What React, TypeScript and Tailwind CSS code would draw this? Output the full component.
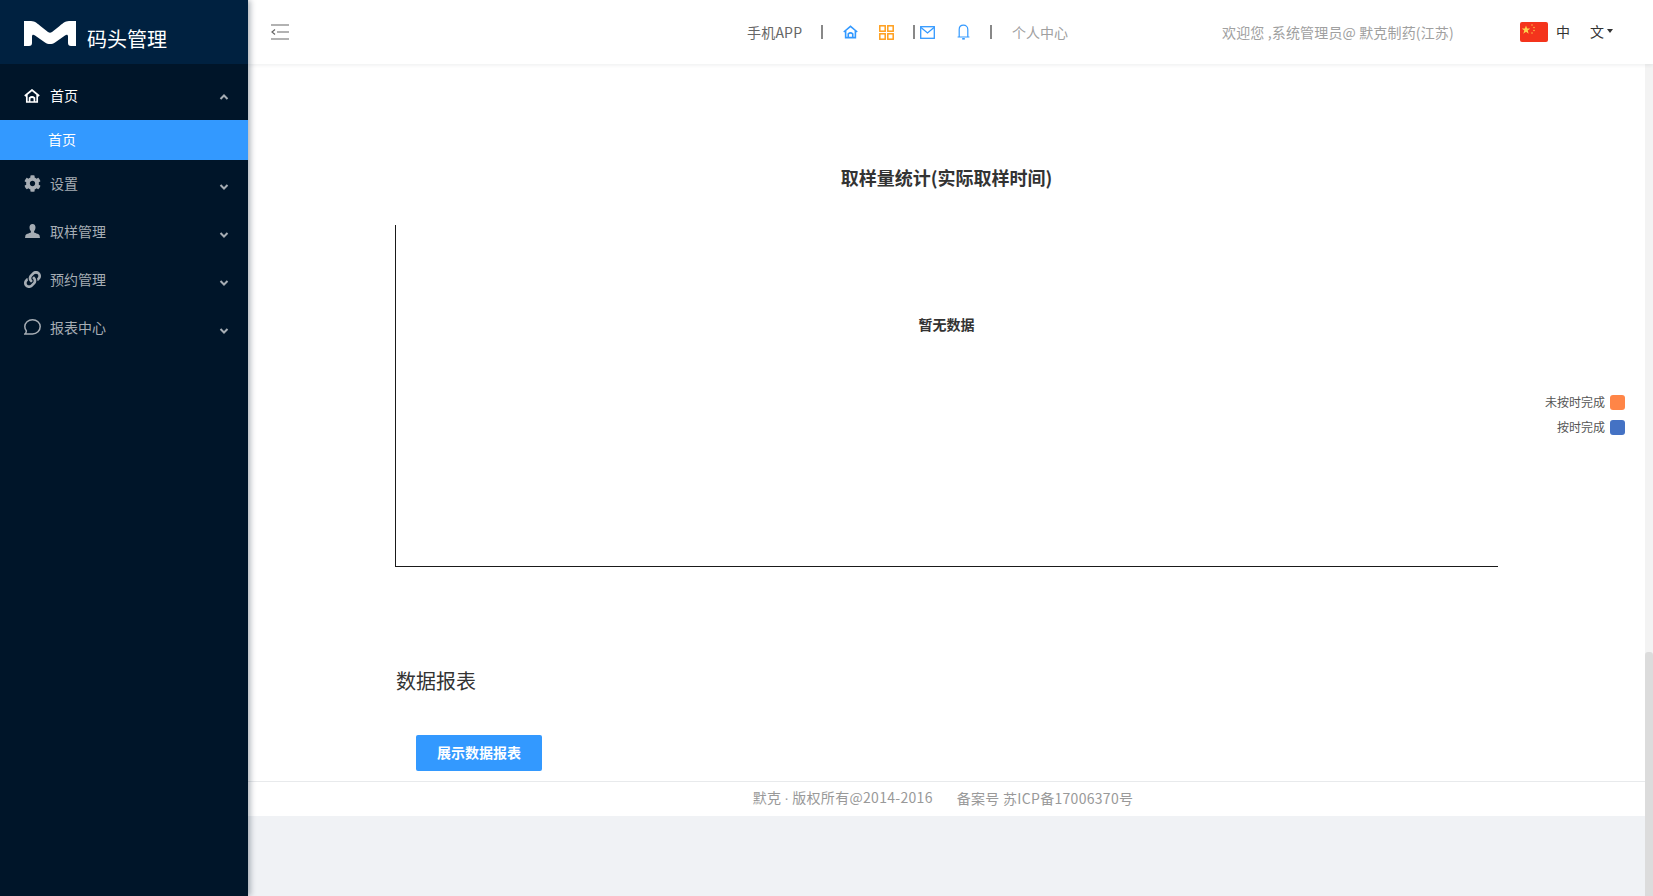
import React from "react";
import { FaCog, FaLink } from "react-icons/fa";

const font = { fontFamily: '"Noto Sans CJK SC", "Liberation Sans", sans-serif' };

function Chevron({ up }: { up?: boolean }) {
  return (
    <svg width="10" height="6" viewBox="0 0 10 6" className={up ? "shrink-0 mt-[2px]" : "shrink-0 mt-[6px]"}>
      <path d={up ? "M1.5 5 L5 1.5 L8.5 5" : "M1.5 1 L5 4.5 L8.5 1"} fill="none" stroke="currentColor" strokeWidth="2" />
    </svg>
  );
}

function HomeIcon({ className = "" }: { className?: string }) {
  return (
    <svg viewBox="0 0 16 14" className={className} fill="none" stroke="currentColor" strokeWidth="1.7">
      <path d="M0.8 7 L8 1 L15.2 7" />
      <path d="M2.8 6 V13 H13.2 V6" />
      <path d="M5.6 13 V9 Q8 7 10.4 9 V13" />
    </svg>
  );
}

function UserIcon() {
  return (
    <svg viewBox="0 0 16 15" className="w-[15px] h-[14px]" fill="currentColor">
      <path d="M8 0 C5.8 0 4.7 1.7 4.8 3.8 C4.9 5.6 5.5 7 6.3 7.8 V9.2 C4.5 10 0.8 10.8 0.4 12.4 L0 15 H16 L15.6 12.4 C15.2 10.8 11.5 10 9.7 9.2 V7.8 C10.5 7 11.1 5.6 11.2 3.8 C11.3 1.7 10.2 0 8 0 Z" />
    </svg>
  );
}

function ChatIcon() {
  return (
    <svg viewBox="0 0 17 16" className="w-[17px] h-[16px] shrink-0" fill="none" stroke="currentColor" strokeWidth="1.5">
      <path d="M8.5 0.8 C12.8 0.8 16.2 3.8 16.2 7.6 C16.2 11.6 12.8 15 8.5 15 H0.8 C2 14 2.4 12.8 2.3 11.8 C1.3 10.6 0.8 9 0.8 7.6 C0.8 3.8 4.2 0.8 8.5 0.8 Z" />
    </svg>
  );
}

function Logo() {
  return (
    <svg viewBox="0 0 52 25" className="w-[52px] h-[25px]" fill="#ffffff">
      <path d="M0 0 H7 C11 0 14 3 17 5.5 L24 11 C25.5 12 26.5 12 28 11 L35 5.5 C38 3 41 0 45 0 H52 V25 H47 C45 25 44 24 44 22 V15.5 C44 13.5 42.5 13.5 41 14.5 L31 21.5 C28 23.5 24 23.5 21 21.5 L11 14.5 C9.5 13.5 8 13.5 8 15.5 V22 C8 24 7 25 5 25 H0 Z" />
    </svg>
  );
}

function Flag() {
  return (
    <svg viewBox="0 0 28 20" className="block w-[28px] h-[20px] rounded-[2px]">
      <rect width="28" height="20" fill="#f4341c" />
      <polygon fill="#fcd34d" points="6,3.5 7.1,6.6 10.3,6.6 7.7,8.6 8.7,11.7 6,9.8 3.3,11.7 4.3,8.6 1.7,6.6 4.9,6.6" />
      <circle cx="12" cy="3" r="0.7" fill="#fcd34d" />
      <circle cx="14" cy="5.5" r="0.7" fill="#fcd34d" />
      <circle cx="14" cy="8.5" r="0.7" fill="#fcd34d" />
      <circle cx="12" cy="11" r="0.7" fill="#fcd34d" />
    </svg>
  );
}

const menus: { label: string; icon: React.ReactNode }[] = [
  { label: "设置", icon: <FaCog className="w-[17px] h-[17px] shrink-0" /> },
  { label: "取样管理", icon: <UserIcon /> },
  { label: "预约管理", icon: <FaLink className="w-[17px] h-[17px] shrink-0" /> },
  { label: "报表中心", icon: <ChatIcon /> },
];

function Sidebar() {
  return (
    <aside className="w-[248px] shrink-0 h-[896px] bg-[#001529] flex flex-col relative z-10 shadow-[2px_0_6px_rgba(0,21,41,0.35)]">
      <div className="h-[64px] bg-[#002140] pl-[24px] flex items-start">
        <div className="mt-[21px]"><Logo /></div>
        <span className="text-white text-[20px] leading-[28px] ml-[11px] mt-[25px]">码头管理</span>
      </div>
      <div className="mt-[8px] h-[48px] flex items-center pl-[24px] pr-[19px] text-white">
        <HomeIcon className="w-[16px] h-[14px] mr-[10px] shrink-0" />
        <span className="text-[14px] flex-1 -mt-[2px]">首页</span>
        <span className="flex text-[#a6adb4]"><Chevron up /></span>
      </div>
      <div className="h-[40px] bg-[#3399ff] flex items-center pl-[48px] text-white text-[14px]">
        <span className="-mt-[2px]">首页</span>
      </div>
      {menus.map((m) => (
        <div key={m.label} className="h-[48px] flex items-center pl-[24px] pr-[19px] text-[#a6adb4]">
          <span className="w-[16px] mr-[10px] flex justify-center -mt-[2px]">{m.icon}</span>
          <span className="text-[14px] flex-1 -mt-[2px]">{m.label}</span>
          <Chevron />
        </div>
      ))}
    </aside>
  );
}

function Divider({ className }: { className: string }) {
  return <span className={`block shrink-0 w-[2px] h-[14px] bg-[#888888] ${className}`} />;
}

function Header() {
  return (
    <header className="h-[64px] shrink-0 bg-white flex items-center shadow-[0_1px_4px_rgba(0,21,41,0.08)] relative">
      <svg viewBox="0 0 18 16" className="w-[18px] h-[16px] ml-[23px] shrink-0 text-[#666666]" fill="none" stroke="currentColor" strokeWidth="1.2">
        <path d="M0 1 H18 M6 8 H18 M0 15 H18" />
        <path d="M4 5.5 L1 8 L4 10.5" />
      </svg>
      <span className="ml-[458px] text-[14px] text-[#666666] w-[55px] whitespace-nowrap tracking-[0.2px]">手机APP</span>
      <Divider className="ml-[19px]" />
      <HomeIcon className="ml-[20px] w-[15px] h-[14px] shrink-0 text-[#3399ff]" />
      <svg viewBox="0 0 15 15" className="ml-[21px] w-[15px] h-[15px] shrink-0 text-[#ff9e1b]" fill="none" stroke="currentColor" strokeWidth="1.5">
        <rect x="0.8" y="0.8" width="5.4" height="5.4" />
        <rect x="8.8" y="0.8" width="5.4" height="5.4" />
        <rect x="0.8" y="8.8" width="5.4" height="5.4" />
        <rect x="8.8" y="8.8" width="5.4" height="5.4" />
      </svg>
      <Divider className="ml-[19px]" />
      <svg viewBox="0 0 15 13" className="ml-[5px] w-[15px] h-[13px] shrink-0 text-[#3399ff]" fill="none" stroke="currentColor" strokeWidth="1.3">
        <rect x="0.7" y="0.7" width="13.6" height="11.6" />
        <path d="M1 1.5 L7.5 7 L14 1.5" />
      </svg>
      <svg viewBox="0 0 13 16" className="ml-[22px] w-[13px] h-[16px] shrink-0 text-[#3399ff]" fill="none" stroke="currentColor" strokeWidth="1.2">
        <path d="M0.6 13 H12.4 M2.2 13 V5.5 C2.2 3 4 1.2 6.5 1.2 C9 1.2 10.8 3 10.8 5.5 V13" />
        <path d="M5.2 14.8 H7.8" strokeWidth="1.6" />
      </svg>
      <Divider className="ml-[20px]" />
      <span className="ml-[20px] text-[14px] text-[#a0a0a0] whitespace-nowrap">个人中心</span>
      <span className="ml-[154px] text-[14px] text-[#a0a0a0] whitespace-nowrap w-[231px] tracking-[0.15px]">欢迎您 ,系统管理员@ 默克制药(江苏)</span>
      <span className="ml-[67px] shrink-0"><Flag /></span>
      <span className="ml-[8px] text-[14px] text-[#333333] -mt-[2px]">中</span>
      <span className="ml-[20px] text-[14px] text-[#333333] flex items-center -mt-[2px]">
        文
        <svg viewBox="0 0 6 4" className="w-[6px] h-[4px] ml-[3px]"><path d="M0 0 H6 L3 4 Z" fill="#333333" /></svg>
      </span>
    </header>
  );
}

function Legend() {
  return (
    <div className="flex flex-col gap-[10px] items-end">
      <div className="flex items-center gap-[5px] text-[12px] leading-[15px] text-[#555555]">
        <span className="-mt-[2px]">未按时完成</span><span className="w-[15px] h-[15px] rounded-[3px] bg-[#ff8547]" />
      </div>
      <div className="flex items-center gap-[5px] text-[12px] leading-[15px] text-[#555555]">
        <span className="-mt-[2px]">按时完成</span><span className="w-[15px] h-[15px] rounded-[3px] bg-[#4472c4]" />
      </div>
    </div>
  );
}

function Chart() {
  return (
    <section className="pt-[99px] relative">
      <h2 className="text-center text-[18px] leading-[28px] font-bold text-[#333333]">取样量统计(实际取样时间)</h2>
      <div className="mt-[34px] ml-[147px] mr-[147px] h-[342px] border-l border-b border-[#1a1a1a] flex justify-center pt-[89px] pr-[1px]">
        <span className="text-[14px] leading-[20px] font-bold text-[#333333]">暂无数据</span>
      </div>
      <div className="absolute right-[20px] top-[331px]"><Legend /></div>
    </section>
  );
}

export default function App() {
  return (
    <div style={font} className="w-[1653px] h-[896px] overflow-hidden flex bg-[#f0f2f5]">
      <Sidebar />
      <main className="flex-1 flex flex-col min-w-0">
        <Header />
        <div className="flex-1 flex min-h-0">
          <div className="flex-1 min-w-0">
            <div className="bg-white h-[717px]">
              <Chart />
              <h3 className="ml-[148px] mt-[99px] text-[20px] leading-[30px] text-[#333333]">数据报表</h3>
              <button className="block ml-[168px] mt-[39px] w-[126px] h-[36px] pb-[2px] bg-[#3399ff] rounded-[2px] text-white text-[14px] font-bold">展示数据报表</button>
            </div>
            <footer className="bg-white h-[35px] border-t border-[#e8eaec] flex justify-center items-center text-[14px] text-[#999999] pr-[7px] tracking-[0.3px]">
              <span className="-mt-[2px] whitespace-nowrap">默克<span className="font-['Liberation_Sans'] mx-[3px]">·</span>版权所有@2014-2016</span>
              <span className="ml-[24px] -mt-[2px] whitespace-nowrap">备案号 苏ICP备17006370号</span>
            </footer>
          </div>
          <div className="w-[8px] shrink-0 bg-[#f3f3f3] flex flex-col justify-end">
            <div className="h-[244px] bg-[#dcdcdc] rounded-t-[3px]" />
          </div>
        </div>
      </main>
    </div>
  );
}
